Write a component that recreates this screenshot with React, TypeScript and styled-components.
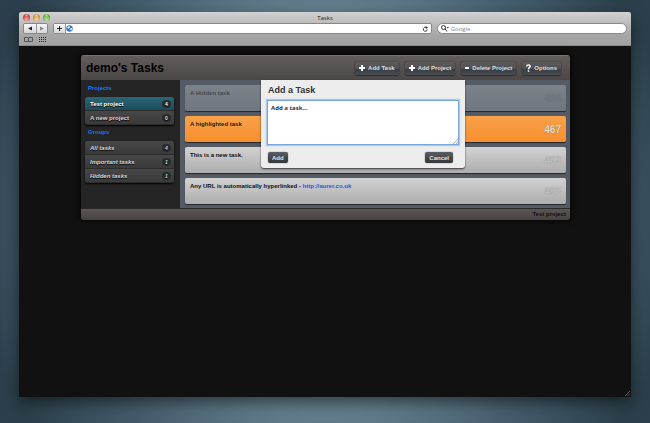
import React from "react";
import styled, { createGlobalStyle, css } from "styled-components";

const GlobalStyle = createGlobalStyle`
  *, *::before, *::after { box-sizing: border-box; }
  body { margin: 0; font-family: "Liberation Sans", Arial, sans-serif; font-size: 6px; line-height: 8px; }
  button, input, textarea { font: inherit; margin: 0; padding: 0; border: 0; background: none; color: inherit; }
  h1, h2, h3, p, ul { margin: 0; padding: 0; font-size: inherit; }
  ul { list-style: none; }
  a { color: inherit; text-decoration: none; }
  svg { display: block; flex: none; }
`;

const Desktop = styled.main`
  display: flex;
  min-height: 100vh;
  padding: 12px 19px 26px;
  background: radial-gradient(ellipse 56% 84% at 50% 50%, #86a3b0 0%, #6f8b99 50%, #465e6e 76%, #2b404c 100%);
`;

const BrowserWindow = styled.section`
  flex: 1;
  display: flex;
  flex-direction: column;
  min-width: 0;
  overflow: hidden;
  background: #111;
  border-radius: 2px 2px 0 0;
  box-shadow: 0 6px 16px rgba(0, 0, 0, 0.55);
`;

const Chrome = styled.header`
  background: linear-gradient(#d2d2d2, #a6a6a6 70%, #a2a2a2);
  border-bottom: 1px solid #8a8a8a;
`;

const TitleBar = styled.div`
  display: grid;
  grid-template-columns: 1fr auto 1fr;
  align-items: center;
  height: 11px;
  padding: 0 4px;
  color: #222;
  font-family: "Open Sans", sans-serif;
`;

const Lights = styled.div`
  display: flex;
  gap: 3px;
`;

const Light = styled.button<{ $color: string }>`
  width: 7px;
  height: 7px;
  border-radius: 50%;
  background: radial-gradient(circle at 50% 90%, #fffa, transparent 60%),
    radial-gradient(circle at 50% 15%, #fff9, transparent 30%), ${(p) => p.$color};
  box-shadow: inset 0 0 1px rgba(0, 0, 0, 0.6);
`;

const Toolbar = styled.div`
  display: flex;
  align-items: center;
  height: 11px;
  padding: 0 4px;
  gap: 5px;
`;

const ButtonPair = styled.div`
  display: flex;
  border: 1px solid #888;
  border-radius: 2px;
  overflow: hidden;
`;

const ChromeButton = styled.button`
  display: flex;
  align-items: center;
  justify-content: center;
  width: 12px;
  height: 9px;
  background: linear-gradient(#f6f6f6, #d8d8d8);
  color: #222;

  & + & {
    width: 11px;
    border-left: 1px solid #999;
    color: #888;
  }
`;

const AddressBar = styled.div`
  display: flex;
  align-items: center;
  flex: 41;
  height: 11px;
  padding-right: 3px;
  border: 1px solid #888;
  border-radius: 2px;
  background: #fff;
  color: #333;

  ${ChromeButton} {
    border-right: 1px solid #999;
  }
`;

const AddressInput = styled.input`
  flex: 1;
  min-width: 0;
  outline: 0;
`;

const SearchBox = styled.label`
  display: flex;
  align-items: center;
  flex: 20;
  height: 11px;
  gap: 2px;
  padding: 0 3px;
  border: 1px solid #888;
  border-radius: 6px;
  background: #fff;
  color: #333;
  font-family: "Open Sans", sans-serif;
`;

const SearchInput = styled.input`
  flex: 1;
  min-width: 0;
  height: 8px;
  outline: 0;
  &::placeholder { color: #888; opacity: 1; }
`;

const BookmarkBar = styled.div`
  display: flex;
  align-items: center;
  gap: 6px;
  height: 11px;
  padding: 0 5px;
  color: #444;
`;

const Page = styled.div`
  position: relative;
  flex: 1;
  padding: 9px 61px 9px 62px;
`;

const ResizeGrip = styled.svg`
  position: absolute;
  right: 1px;
  bottom: 1px;
`;

const Panel = styled.article`
  border-radius: 3px;
  overflow: hidden;
  background: #252525;
  box-shadow: 0 0 6px #000;
`;

const PanelHeader = styled.header`
  display: flex;
  align-items: center;
  justify-content: space-between;
  height: 25px;
  padding: 0 9px 0 5px;
  background: linear-gradient(#625d5b, #4b4746);
  border-top: 1px solid #77716f;
`;

const PanelTitle = styled.h1`
  color: #000;
  font-size: 12px;
  line-height: 16px;
`;

const Actions = styled.nav`
  display: flex;
  gap: 6px;
`;

const ActionButton = styled.button`
  display: flex;
  align-items: center;
  gap: 3px;
  height: 13px;
  padding: 0 4px;
  border-radius: 2px;
  background: linear-gradient(#5c5b5b, #505154 50%, #3a3e44 55%, #484d53);
  box-shadow: 0 0 1px 1px rgba(0, 0, 0, 0.12), 0 1px 1px rgba(0, 0, 0, 0.3);
  color: #ddd;
  font-weight: bold;
`;

const Columns = styled.div`
  display: flex;
`;

const Sidebar = styled.aside`
  flex: 0 0 99px;
  padding: 3px 6px 4px 4px;
  background: #252525;
`;

const GroupTitle = styled.h2`
  padding-left: 3px;
  line-height: 10px;
  color: #0b7cf5;
`;

const ProjectList = styled.ul`
  margin: 4px 0 2px;
  border-radius: 3px;
  overflow: hidden;
  box-shadow: 0 1px 2px #000;
`;

const ProjectLink = styled.a<{ $active?: boolean; $italic?: boolean }>`
  display: flex;
  align-items: center;
  justify-content: space-between;
  height: 14px;
  padding: 0 3px 0 5px;
  border-bottom: 1px solid #2b2b2b;
  background: linear-gradient(#474747, #3a3a3a);
  color: #d6d6d6;
  font-weight: bold;
  font-style: ${(p) => (p.$italic ? "italic" : "normal")};
  text-shadow: 0 1px 1px #000;
  ${(p) =>
    p.$active &&
    css`
      background: linear-gradient(#2b6678, #1d4b5b);
      color: #fff;
    `}
`;

const Count = styled.span`
  min-width: 9px;
  border-radius: 4px;
  background: #2b2b2b;
  text-align: center;
  font-size: 5px;
`;

const Content = styled.div`
  position: relative;
  flex: 1;
  min-width: 0;
  padding: 5px 4px 4px 5px;
  background: #555b65;
`;

const TaskList = styled.ul`
  display: flex;
  flex-direction: column;
  gap: 5px;
`;

const tones = {
  hidden: "color: #454b50; background: linear-gradient(#7c8289, #70767d);",
  highlighted: "color: #2d1c08; background: linear-gradient(#f8a148, #f78f30);",
  normal: "color: #111; background: linear-gradient(#d2d2d2, #adadad);",
};

const numberTones = {
  hidden: "color: #737980; text-shadow: 0 0 1px #62686f;",
  highlighted: "color: #e6dccf; text-shadow: 0 0 1px #8a6238;",
  normal: "color: #c0c0c0; text-shadow: 0 0 1px #888;",
};

type Tone = keyof typeof tones;

const TaskCard = styled.li<{ $tone: Tone }>`
  display: flex;
  justify-content: space-between;
  min-height: 26px;
  padding: 4px 5px;
  border-radius: 2px;
  font-weight: bold;
  box-shadow: 0 1px 1px rgba(0, 0, 0, 0.6);
  ${(p) => tones[p.$tone]}
`;

const TaskNumber = styled.span<{ $tone: Tone }>`
  align-self: flex-end;
  font-size: 10px;
  line-height: 16px;
  font-weight: bold;
  ${(p) => numberTones[p.$tone]}
`;

const TaskLink = styled.a`
  color: #0b62f0;
`;

const PanelFooter = styled.footer`
  height: 12px;
  padding: 1px 4px;
  border-top: 1px solid #2b2929;
  background: linear-gradient(#5a5655, #474342);
  color: #111;
  font-weight: bold;
  text-align: right;
`;

const Dialog = styled.form`
  position: absolute;
  top: 0;
  left: 81px;
  width: 204px;
  padding: 4px 6px 5px;
  border-radius: 0 0 3px 3px;
  background: #ededed;
  box-shadow: 0 1px 2px rgba(0, 0, 0, 0.7);
`;

const DialogTitle = styled.label`
  display: block;
  margin-bottom: 4px;
  padding-left: 1px;
  color: #333;
  font-size: 9px;
  line-height: 12px;
  font-weight: bold;
`;

const TextWrap = styled.div`
  position: relative;
`;

const TaskText = styled.textarea`
  display: block;
  width: 100%;
  height: 45px;
  padding: 3px;
  border: 1px solid #7ba6d8;
  box-shadow: 0 0 1px 1px #a9c8ec;
  outline: 0;
  resize: none;
  background: #fff;
  color: #333;
  font-family: "Noto Sans", sans-serif;
  font-weight: bold;
`;

const TextGrip = styled.svg`
  position: absolute;
  right: 1px;
  bottom: 1px;
`;

const DialogActions = styled.div`
  display: flex;
  justify-content: space-between;
  padding: 7px 6px 0 1px;
`;

const DialogButton = styled.button`
  height: 11px;
  padding: 0 4px;
  border-radius: 2px;
  background: linear-gradient(#5a5e63, #33373c);
  box-shadow: 0 0 1px #222;
  color: #e6e6e6;
  font-weight: bold;
`;

const PlusIcon = () => (
  <svg width="6" height="6" viewBox="0 0 6 6" aria-hidden="true">
    <path d="M3 0v6M0 3h6" stroke="#fff" strokeWidth="2" />
  </svg>
);

const MinusIcon = () => (
  <svg width="4" height="6" viewBox="0 0 4 6" aria-hidden="true">
    <path d="M0 3h4" stroke="#fff" strokeWidth="2" />
  </svg>
);

const QuestionIcon = () => (
  <svg width="5" height="8" viewBox="0 0 5 8" aria-hidden="true">
    <path d="M.8 2.4C.8.4 4.2.4 4.2 2.3 4.2 3.5 2.5 3.6 2.5 5.2M2.5 6.2v1.5" fill="none" stroke="#fff" strokeWidth="1.5" />
  </svg>
);

const Arrow = ({ flip }: { flip?: boolean }) => (
  <svg width="4" height="5" viewBox="0 0 4 5" aria-hidden="true">
    <path d={flip ? "M0 .5v4l4-2z" : "M4 .5v4l-4-2z"} fill="currentColor" />
  </svg>
);

const Globe = () => (
  <svg width="7" height="7" viewBox="0 0 14 14" aria-hidden="true">
    <circle cx="7" cy="7" r="6.5" fill="#3978c6" />
    <path d="M2 4l5-2 1 3-3 3zM9 6l4 0-2 5-3-2z" fill="#d5eafa" />
  </svg>
);

const actions = [
  { label: "Add Task", icon: <PlusIcon /> },
  { label: "Add Project", icon: <PlusIcon /> },
  { label: "Delete Project", icon: <MinusIcon /> },
  { label: "Options", icon: <QuestionIcon /> },
];

const groups = [
  { title: "Projects", italic: false, items: [{ name: "Test project", count: 4, active: true }, { name: "A new project", count: 0 }] },
  { title: "Groups", italic: true, items: [{ name: "All tasks", count: 4 }, { name: "Important tasks", count: 1 }, { name: "Hidden tasks", count: 1 }] },
] as { title: string; italic: boolean; items: { name: string; count: number; active?: boolean }[] }[];

const tasks: { id: number; tone: Tone; text: React.ReactNode }[] = [
  { id: 466, tone: "hidden", text: "A Hidden task" },
  { id: 467, tone: "highlighted", text: "A highlighted task" },
  { id: 463, tone: "normal", text: "This is a new task." },
  {
    id: 465,
    tone: "normal",
    text: (
      <>
        Any URL is automatically hyperlinked - <TaskLink href="#aurer">http://aurer.co.uk</TaskLink>
      </>
    ),
  },
];

export default function App() {
  return (
    <>
      <GlobalStyle />
      <Desktop>
        <BrowserWindow>
          <Chrome>
            <TitleBar>
              <Lights>
                <Light $color="#dc4640" aria-label="Close" />
                <Light $color="#e5a13a" aria-label="Minimize" />
                <Light $color="#6db840" aria-label="Zoom" />
              </Lights>
              <span>Tasks</span>
            </TitleBar>
            <Toolbar>
              <ButtonPair>
                <ChromeButton aria-label="Back"><Arrow /></ChromeButton>
                <ChromeButton aria-label="Forward"><Arrow flip /></ChromeButton>
              </ButtonPair>
              <AddressBar>
                <ChromeButton aria-label="Add bookmark">
                  <svg width="5" height="5" viewBox="0 0 5 5"><path d="M2.5 0v5M0 2.5h5" stroke="currentColor" /></svg>
                </ChromeButton>
                <Globe />
                <AddressInput aria-label="Address" />
                <svg width="5" height="6" viewBox="0 0 10 12" aria-hidden="true">
                  <path d="M8.5 7A4 4 0 1 1 7 3.5" fill="none" stroke="currentColor" strokeWidth="1.8" />
                  <path d="M5 0l5 3-4 3z" fill="currentColor" />
                </svg>
              </AddressBar>
              <SearchBox>
                <svg width="8" height="7" viewBox="0 0 16 14" aria-hidden="true">
                  <circle cx="5" cy="5" r="4" fill="none" stroke="currentColor" strokeWidth="2" />
                  <path d="M8 8l4 5" stroke="currentColor" strokeWidth="2" />
                  <path d="M11 4h5l-2.5 3z" fill="currentColor" />
                </svg>
                <SearchInput aria-label="Search" placeholder="Google" />
              </SearchBox>
            </Toolbar>
            <BookmarkBar>
              <svg width="9" height="5" viewBox="0 0 9 5" aria-hidden="true">
                <path d="M.5.5h3.5l.5.5.5-.5h3.5v4h-8zM4.5 1v3.5" fill="none" stroke="currentColor" strokeWidth=".8" />
              </svg>
              <svg width="7" height="5" viewBox="0 0 7 5" aria-hidden="true">
                <path d="M0 .5h7M0 2.5h7M0 4.5h7" stroke="#222" strokeDasharray="1 1" />
              </svg>
            </BookmarkBar>
          </Chrome>
          <Page>
            <Panel>
              <PanelHeader>
                <PanelTitle>demo's Tasks</PanelTitle>
                <Actions>
                  {actions.map((a) => (
                    <ActionButton key={a.label}>{a.icon}{a.label}</ActionButton>
                  ))}
                </Actions>
              </PanelHeader>
              <Columns>
                <Sidebar>
                  {groups.map((g) => (
                    <React.Fragment key={g.title}>
                      <GroupTitle>{g.title}</GroupTitle>
                      <ProjectList>
                        {g.items.map((i) => (
                          <li key={i.name}>
                            <ProjectLink href="#tasks" $active={i.active} $italic={g.italic}>
                              {i.name}
                              <Count>{i.count}</Count>
                            </ProjectLink>
                          </li>
                        ))}
                      </ProjectList>
                    </React.Fragment>
                  ))}
                </Sidebar>
                <Content>
                  <TaskList>
                    {tasks.map((t) => (
                      <TaskCard key={t.id} $tone={t.tone}>
                        <p>{t.text}</p>
                        <TaskNumber $tone={t.tone}>{t.id}</TaskNumber>
                      </TaskCard>
                    ))}
                  </TaskList>
                  <Dialog onSubmit={(e) => e.preventDefault()}>
                    <DialogTitle htmlFor="task-text">Add a Task</DialogTitle>
                    <TextWrap>
                      <TaskText
                        id="task-text"
                        defaultValue="Add a task..."
                        autoFocus
                        onFocus={(e) => e.target.setSelectionRange(e.target.value.length, e.target.value.length)}
                      />
                      <TextGrip width="5" height="5" viewBox="0 0 5 5" aria-hidden="true">
                        <path d="M0 5l5-5M3 5l2-2" stroke="#888" strokeWidth=".7" />
                      </TextGrip>
                    </TextWrap>
                    <DialogActions>
                      <DialogButton type="submit">Add</DialogButton>
                      <DialogButton type="button">Cancel</DialogButton>
                    </DialogActions>
                  </Dialog>
                </Content>
              </Columns>
              <PanelFooter>Test project</PanelFooter>
            </Panel>
            <ResizeGrip width="5" height="5" viewBox="0 0 5 5" aria-hidden="true">
              <path d="M0 5l5-5M2.5 5l2.5-2.500" stroke="#666" strokeWidth=".8" />
            </ResizeGrip>
          </Page>
        </BrowserWindow>
      </Desktop>
    </>
  );
}
